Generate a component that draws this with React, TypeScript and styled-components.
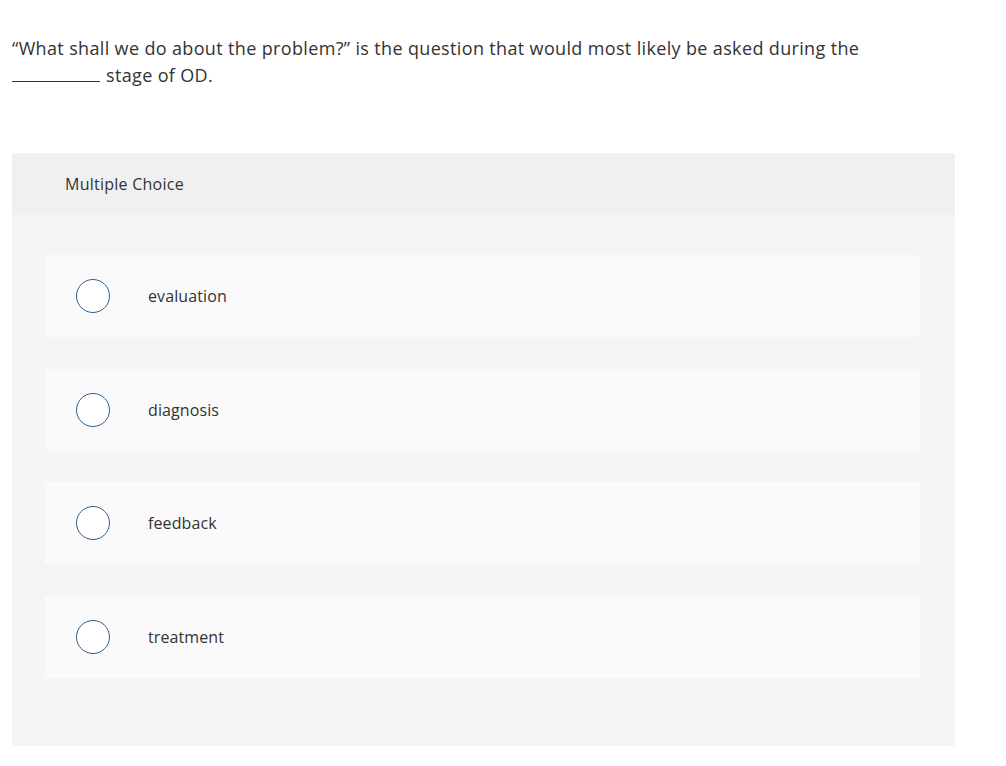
import React from "react";
import styled, { createGlobalStyle } from "styled-components";

const GlobalStyle = createGlobalStyle`
  body {
    margin: 0;
    background: #ffffff;
    font-family: "Open Sans", "Liberation Sans", sans-serif;
    color: #333333;
  }
`;

const Page = styled.div`
  padding: 35px 12px 20px 12px;
  width: 943px;
`;

const Prompt = styled.p`
  margin: 0;
  font-size: 18px;
  line-height: 27px;
  letter-spacing: 0.35px;
  color: #333333;
  padding-right: 40px;
`;

const Blank = styled.span`
  display: inline-block;
  width: 88px;
  border-bottom: 1px solid #333333;
  height: 19px;
  margin-right: 6px;
  vertical-align: baseline;
`;

const Panel = styled.div`
  margin-top: 64px;
  background: #f5f5f5;
  border-radius: 3px;
  overflow: hidden;
`;

const PanelHeader = styled.div`
  height: 62px;
  background: #f0f0f0;
  display: flex;
  align-items: center;
  padding-left: 53px;
  font-size: 16px;
  letter-spacing: 0.25px;
  color: #333333;
`;

const Options = styled.div`
  display: flex;
  flex-direction: column;
  gap: 31.5px;
  padding: 40px 35px 68px 33px;
`;

const Option = styled.label`
  height: 82px;
  background: #fafafa;
  border-radius: 3px;
  display: flex;
  align-items: center;
  padding-left: 31px;
  cursor: pointer;
`;

const Radio = styled.span`
  width: 32px;
  height: 32px;
  border-radius: 50%;
  border: 1.5px solid #2f5d8c;
  background: #ffffff;
  flex: none;
`;

const OptionText = styled.span`
  margin-left: 38px;
  font-size: 16px;
  letter-spacing: 0.1px;
  color: #333333;
`;

const choices = ["evaluation", "diagnosis", "feedback", "treatment"];

const App: React.FC = () => (
  <>
    <GlobalStyle />
    <Page>
      <Prompt>
        “What shall we do about the problem?” is the question that would most
        likely be asked during the <Blank />
        stage of OD.
      </Prompt>
      <Panel>
        <PanelHeader>Multiple Choice</PanelHeader>
        <Options>
          {choices.map((c) => (
            <Option key={c}>
              <Radio />
              <OptionText>{c}</OptionText>
            </Option>
          ))}
        </Options>
      </Panel>
    </Page>
  </>
);

export default App;
